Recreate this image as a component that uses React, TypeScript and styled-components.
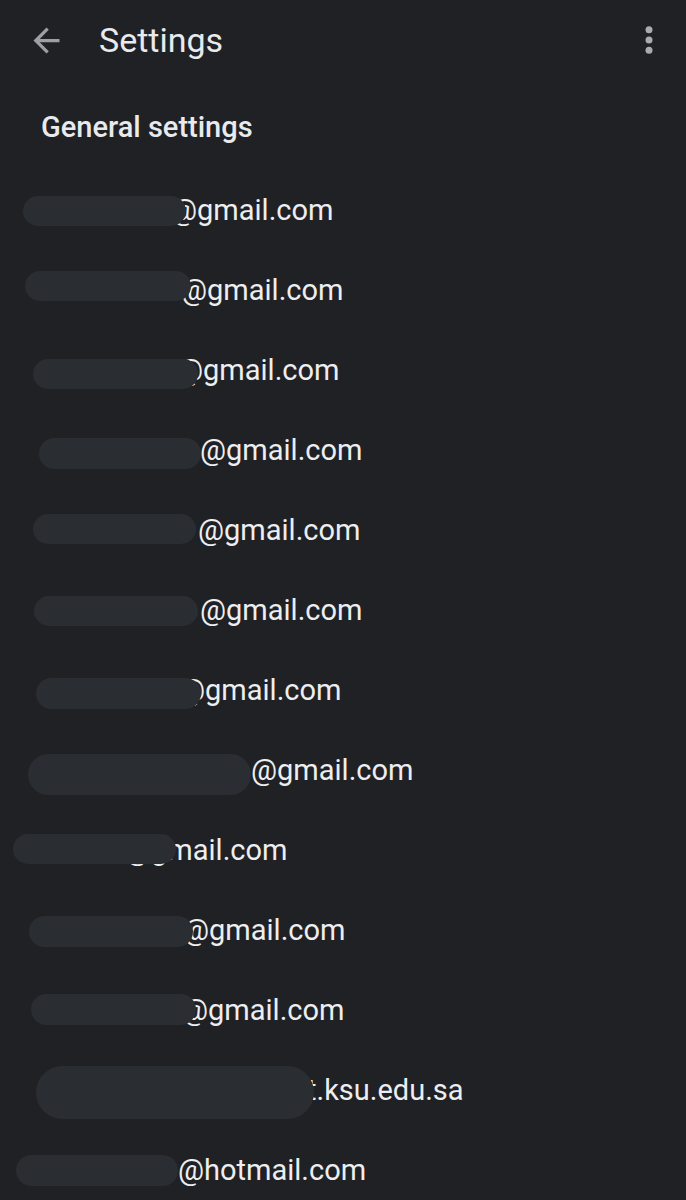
import React from 'react';
import styled, { createGlobalStyle } from 'styled-components';

const GlobalStyle = createGlobalStyle`
	html, body {
		margin: 0;
		padding: 0;
		background: #202124;
	}
	body {
		font-family: Roboto, "Noto Sans", Arial, sans-serif;
		color: #e8eaed;
	}
`

const Page = styled.div`
	width: 686px;
	min-height: 1200px;
	background: #202124;
	overflow: hidden;
`

const TopBar = styled.header`
	height: 80px;
	display: flex;
	align-items: center;
	padding: 0 17px 0 27px;
`

const IconButton = styled.button`
	border: none;
	background: transparent;
	padding: 0;
	display: flex;
	align-items: center;
	justify-content: center;
	color: #9aa0a6;
	cursor: pointer;
`

const Title = styled.h1`
	margin: 0 0 0 33px;
	font-size: 34px;
	line-height: 1;
	font-weight: 400;
	color: #e8eaed;
	flex: 1;
`

const SectionTitle = styled.h2`
	margin: 33px 0 27px 41px;
	font-size: 29px;
	line-height: 1;
	font-weight: 500;
	color: #e8eaed;
`

const AccountList = styled.ul`
	list-style: none;
	margin: 0;
	padding: 0;
`

const AccountRow = styled.li<{ $indent: number }>`
	position: relative;
	height: 80px;
	line-height: 82px;
	font-size: 29px;
	padding-left: ${p => p.$indent}px;
	white-space: nowrap;
	color: #eceef1;
`

const Redaction = styled.span<{ $left: number; $top: number; $width: number; $height: number }>`
	position: absolute;
	left: ${p => p.$left}px;
	top: ${p => p.$top}px;
	width: ${p => p.$width}px;
	height: ${p => p.$height}px;
	border-radius: ${p => p.$height / 2}px;
	background: #2a2d31;
`

type Account = {
	text: string;
	indent: number;
	blob: [number, number, number, number];
};

const accounts: Account[] = [
	{ text: '@gmail.com', indent: 171, blob: [23, 27, 163, 30] },
	{ text: '@gmail.com', indent: 181, blob: [25, 22, 166, 30] },
	{ text: '@gmail.com', indent: 177, blob: [33, 30, 165, 30] },
	{ text: '@gmail.com', indent: 200, blob: [39, 29, 162, 31] },
	{ text: '@gmail.com', indent: 198, blob: [33, 25, 163, 30] },
	{ text: '@gmail.com', indent: 200, blob: [34, 27, 164, 30] },
	{ text: '@gmail.com', indent: 179, blob: [36, 29, 165, 31] },
	{ text: '@gmail.com', indent: 251, blob: [28, 25, 223, 41] },
	{ text: '@gmail.com', indent: 125, blob: [13, 25, 163, 30] },
	{ text: '@gmail.com', indent: 183, blob: [29, 27, 164, 31] },
	{ text: '@gmail.com', indent: 182, blob: [31, 25, 165, 31] },
	{ text: 't.ksu.edu.sa', indent: 307, blob: [36, 17, 278, 53] },
	{ text: '@hotmail.com', indent: 178, blob: [16, 26, 162, 31] },
];

function BackArrow() {
	return (
		<svg width="39" height="39" viewBox="0 0 24 24" fill="currentColor">
			<path d="M20 11H7.83l5.59-5.59L12 4l-8 8 8 8 1.41-1.41L7.83 13H20v-2z" />
		</svg>
	);
}

function MoreVert() {
	return (
		<svg width="40" height="40" viewBox="0 0 24 24" fill="#a8abb0">
			<circle cx="12" cy="5.8" r="2.1" />
			<circle cx="12" cy="12" r="2.1" />
			<circle cx="12" cy="18.2" r="2.1" />
		</svg>
	);
}

function App() {
	return (
		<Page>
			<GlobalStyle />
			<TopBar>
				<IconButton aria-label="Back">
					<BackArrow />
				</IconButton>
				<Title>Settings</Title>
				<IconButton aria-label="More options">
					<MoreVert />
				</IconButton>
			</TopBar>
			<SectionTitle>General settings</SectionTitle>
			<AccountList>
				{accounts.map((a, i) => (
					<AccountRow key={i} $indent={a.indent}>
						{a.text}
						<Redaction $left={a.blob[0]} $top={a.blob[1]} $width={a.blob[2]} $height={a.blob[3]} />
					</AccountRow>
				))}
			</AccountList>
		</Page>
	);
}

export default App;
